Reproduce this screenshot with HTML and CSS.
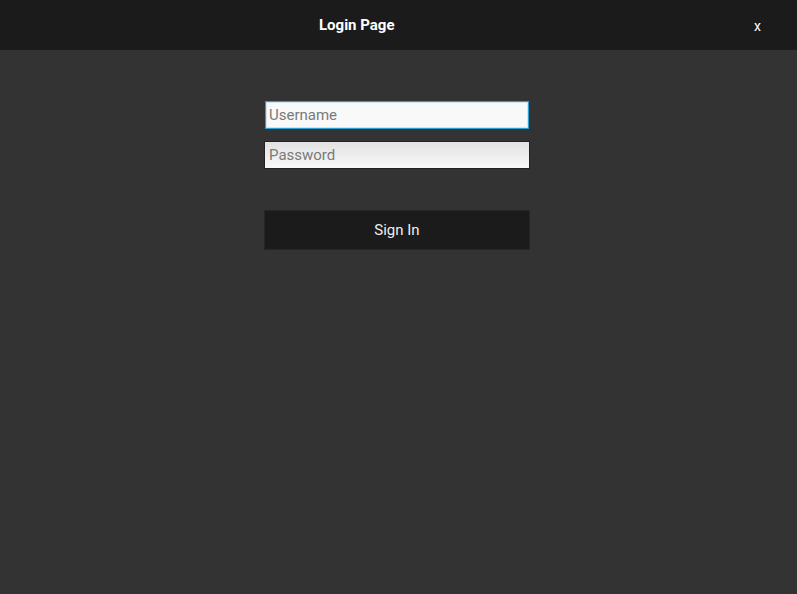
FILE: index.html
```html
<!DOCTYPE html>
<html>
<head>
<meta charset="utf-8">
<link rel="stylesheet" href="styles.css">
</head>
<body>
<header class="topbar">
  <div class="title">Login Page</div>
  <div class="close">x</div>
</header>
<main class="content">
  <form class="login">
    <div class="field field-focus"><span class="ph">Username</span></div>
    <div class="field field-pass"><span class="ph">Password</span></div>
    <button type="button" class="signin">Sign In</button>
  </form>
</main>
</body>
</html>
```
FILE: styles.css
```css
html, body {
  margin: 0;
  padding: 0;
  height: 100%;
}
body {
  background: #333333;
  font-family: Roboto, "Liberation Sans", sans-serif;
  display: flex;
  flex-direction: column;
}
.topbar {
  height: 50px;
  background: #1b1b1b;
  display: flex;
  align-items: center;
}
.title {
  color: #ffffff;
  font-weight: bold;
  font-size: 15px;
  margin-left: 319px;
  margin-top: -1px;
}
.close {
  color: #ffffff;
  font-size: 14px;
  margin-left: auto;
  margin-right: 36px;
  margin-top: 2px;
}
.content {
  flex: 1;
  display: flex;
  justify-content: center;
}
.login {
  width: 266px;
  margin-top: 51px;
  margin-left: -3px;
  display: flex;
  flex-direction: column;
}
.field {
  height: 28px;
  box-sizing: border-box;
  display: flex;
  align-items: center;
  padding-left: 4px;
  font-size: 15px;
  color: #7a7a7a;
}
.field-focus {
  margin: 0 1px;
  border: 1px solid #2a9fd6;
  background: #f9f9f9;
  box-shadow: inset 0 0 0 1px #cfe6f2;
  padding-left: 3px;
}
.field-pass {
  margin-top: 12px;
  border: 1px solid #222222;
  background: linear-gradient(#e2e2e2, #f8f8f8);
}
.ph {
  line-height: 1;
}
.signin {
  margin-top: 41px;
  height: 40px;
  width: 266px;
  background: #1b1b1b;
  border: 1px solid #262626;
  color: #eeeeee;
  font-family: Roboto, "Liberation Sans", sans-serif;
  font-size: 15px;
  padding: 0;
  cursor: pointer;
}
```
